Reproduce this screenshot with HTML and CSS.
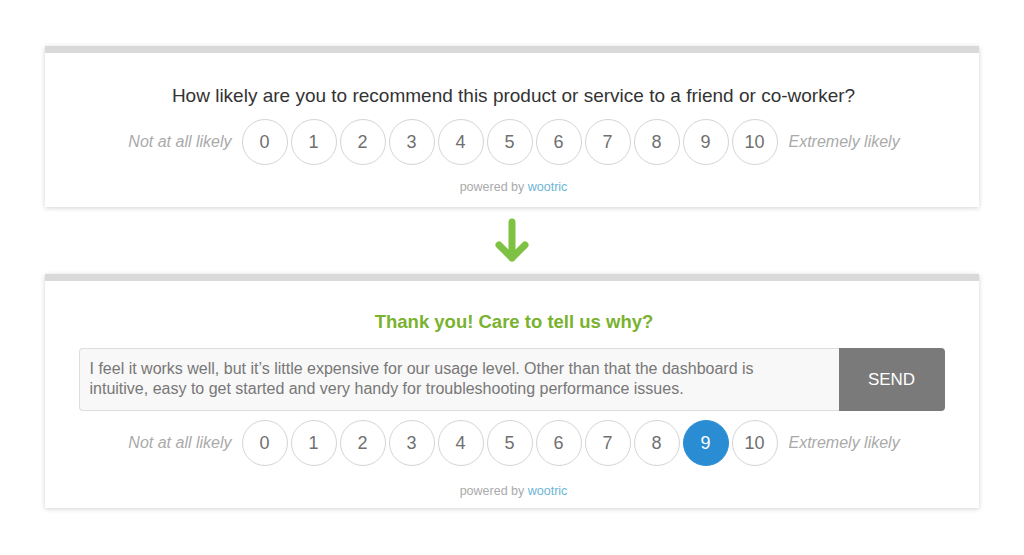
FILE: index.html
```html
<!DOCTYPE html>
<html>
<head>
    <title>NPS Survey</title>
    <link rel="stylesheet" href="styles.css">
</head>
<body>
    <div class="page">
        <div class="card card-first">
            <h2 class="question">How likely are you to recommend this product or service to a friend or co-worker?</h2>
            <div class="scale">
                <span class="hint">Not at all likely</span>
                <span class="score">0</span>
                <span class="score">1</span>
                <span class="score">2</span>
                <span class="score">3</span>
                <span class="score">4</span>
                <span class="score">5</span>
                <span class="score">6</span>
                <span class="score">7</span>
                <span class="score">8</span>
                <span class="score">9</span>
                <span class="score">10</span>
                <span class="hint">Extremely likely</span>
            </div>
            <p class="powered">powered by <span class="brand">wootric</span></p>
        </div>

        <div class="arrow">
            <svg width="40" height="48" viewBox="0 0 40 48">
                <path d="M20 5 L20 41 M7 28 L20 41 L33 28" fill="none" stroke="#7dc242" stroke-width="7" stroke-linecap="round" stroke-linejoin="round"/>
            </svg>
        </div>

        <div class="card card-second">
            <h2 class="thanks">Thank you! Care to tell us why?</h2>
            <div class="feedback">
                <div class="feedback-text">I feel it works well, but it’s little expensive for our usage level. Other than that the dashboard is<br>intuitive, easy to get started and very handy for troubleshooting performance issues.</div>
                <button class="send">SEND</button>
            </div>
            <div class="scale">
                <span class="hint">Not at all likely</span>
                <span class="score">0</span>
                <span class="score">1</span>
                <span class="score">2</span>
                <span class="score">3</span>
                <span class="score">4</span>
                <span class="score">5</span>
                <span class="score">6</span>
                <span class="score">7</span>
                <span class="score">8</span>
                <span class="score selected">9</span>
                <span class="score">10</span>
                <span class="hint">Extremely likely</span>
            </div>
            <p class="powered">powered by <span class="brand">wootric</span></p>
        </div>
    </div>
</body>
</html>
```

FILE: styles.css
```css
body {
    margin: 0;
    background: #fff;
    font-family: "Liberation Sans", Arial, sans-serif;
}
.page {
    display: flex;
    flex-direction: column;
    align-items: center;
    padding: 46px 0 47px;
}
.card {
    width: 934px;
    box-sizing: border-box;
    background: #fff;
    border-top: 7px solid #d9d9d9;
    box-shadow: 0 1px 5px rgba(0, 0, 0, 0.18);
    display: flex;
    flex-direction: column;
    align-items: center;
}
.card-first {
    padding: 31px 0 12px;
}
.card-second {
    padding: 30px 0 9px;
}
.question {
    margin: 0 0 11px 3px;
    font-size: 19px;
    line-height: 24px;
    font-weight: normal;
    color: #333;
}
.thanks {
    margin: 0 0 15px 4px;
    font-size: 18.5px;
    line-height: 22px;
    font-weight: bold;
    color: #79b22e;
}
.scale {
    display: flex;
    align-items: center;
    gap: 3px;
    margin-left: 4px;
}
.hint {
    font-size: 16px;
    font-style: italic;
    color: #aaa;
}
.hint:first-child {
    margin-right: 7px;
}
.hint:last-child {
    margin-left: 8px;
}
.score {
    width: 46px;
    height: 46px;
    box-sizing: border-box;
    border: 1.5px solid #d4d4d4;
    border-radius: 50%;
    display: flex;
    align-items: center;
    justify-content: center;
    font-size: 18px;
    color: #707070;
}
.score.selected {
    background: #2a8dd4;
    border-color: #2a8dd4;
    color: #fff;
}
.powered {
    margin: 14px 0 0 3px;
    font-size: 12.5px;
    line-height: 16px;
    color: #aaa;
}
.card-second .powered {
    margin-top: 17px;
}
.brand {
    color: #6bb5d6;
}
.arrow {
    height: 67px;
    display: flex;
    align-items: center;
    justify-content: center;
}
.feedback {
    width: 866px;
    height: 63px;
    display: flex;
    margin: 0 1px 9px 0;
}
.feedback-text {
    flex: 1;
    box-sizing: border-box;
    padding: 10px 10px;
    background: #f8f8f8;
    border: 1px solid #ddd;
    border-right: none;
    border-radius: 4px 0 0 4px;
    font-size: 16px;
    line-height: 20px;
    color: #777;
}
.send {
    width: 106px;
    border: none;
    border-radius: 0 4px 4px 0;
    background: #7a7a7a;
    color: #fff;
    font-family: inherit;
    font-size: 17px;
}
```
